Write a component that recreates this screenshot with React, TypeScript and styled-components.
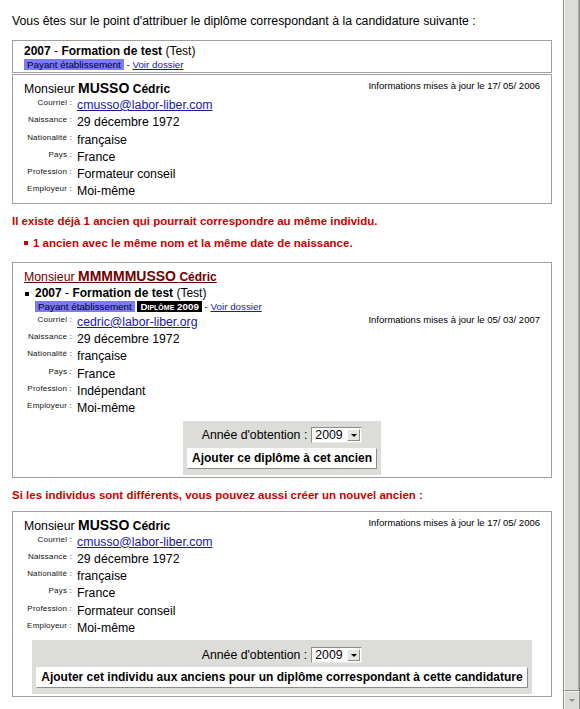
import styled, { createGlobalStyle } from "styled-components";

type Field = { label: string; value: string; link?: boolean };

const GlobalStyle = createGlobalStyle`
  html, body {
    margin: 0;
    padding: 0;
    background: #fff;
  }
  body {
    font-family: "Liberation Sans", Arial, sans-serif;
    font-size: 12.3px;
    color: #000;
    overflow: hidden;
  }
`;

const fieldsFor = (email: string, profession: string): Field[] => [
  { label: "Courriel", value: email, link: true },
  { label: "Naissance", value: "29 décembre 1972" },
  { label: "Nationalité", value: "française" },
  { label: "Pays", value: "France" },
  { label: "Profession", value: profession },
  { label: "Employeur", value: "Moi-même" },
];

const FormationSummary = (props: { diploma?: string }) => (
  <div>
    <FormationLine>
      <b>2007</b> - <b>Formation de test</b> (Test)
    </FormationLine>
    <BadgeLine>
      <Badge>Payant établissement</Badge>
      {props.diploma && (
        <>
          {" "}
          <Badge $variant="diploma">Diplôme {props.diploma}</Badge>
        </>
      )}{" "}
      - <SmallLink href="#">Voir dossier</SmallLink>
    </BadgeLine>
  </div>
);

const ActionPanel = (props: { label: string }) => (
  <Panel>
    <YearLine>
      Année d'obtention :
      <FakeSelect>
        <span>2009</span>
        <SelectArrow />
      </FakeSelect>
    </YearLine>
    <ActionButton type="button">{props.label}</ActionButton>
  </Panel>
);

const Fields = (props: { fields: Field[] }) => (
  <>
    {props.fields.map((f) => (
      <FieldRow key={f.label}>
        <FieldLabel>{f.label} :</FieldLabel>
        {f.link ? <ValueLink href="#">{f.value}</ValueLink> : <span>{f.value}</span>}
      </FieldRow>
    ))}
  </>
);

const PersonCard = (props: {
  surname: string;
  updated: string;
  fields: Field[];
  match?: boolean;
  formation?: boolean;
  action?: string;
}) => {
  const updated = <Updated>Informations mises à jour le {props.updated}</Updated>;
  return (
    <Box $padding="5px 11px 2px">
      {!props.formation && updated}
      <NameLine>
        <Name $match={props.match}>
          Monsieur <Surname>{props.surname}</Surname> <FirstName>Cédric</FirstName>
        </Name>
      </NameLine>
      {props.formation && (
        <>
          <FormationItem>
            <FormationSummary diploma="2009" />
          </FormationItem>
          {updated}
        </>
      )}
      <Fields fields={props.fields} />
      {props.action && <ActionPanel label={props.action} />}
    </Box>
  );
};

export default function App() {
  return (
    <Page>
      <GlobalStyle />
      <Content>
        <Intro>
          Vous êtes sur le point d'attribuer le diplôme correspondant à la candidature suivante :
        </Intro>
        <Box $padding="3px 11px 2px">
          <FormationSummary />
        </Box>
        <PersonCard
          surname="MUSSO"
          updated="17/ 05/ 2006"
          fields={fieldsFor("cmusso@labor-liber.com", "Formateur conseil")}
        />

        <Warning>Il existe déjà 1 ancien qui pourrait correspondre au même individu.</Warning>
        <WarningList>
          <WarningItem>1 ancien avec le même nom et la même date de naissance.</WarningItem>
        </WarningList>

        <PersonCard
          match
          formation
          surname="MMMMMUSSO"
          updated="05/ 03/ 2007"
          fields={fieldsFor("cedric@labor-liber.org", "Indépendant")}
          action="Ajouter ce diplôme à cet ancien"
        />

        <Warning $spaced>
          Si les individus sont différents, vous pouvez aussi créer un nouvel ancien :
        </Warning>

        <PersonCard
          surname="MUSSO"
          updated="17/ 05/ 2006"
          fields={fieldsFor("cmusso@labor-liber.com", "Formateur conseil")}
          action="Ajouter cet individu aux anciens pour un diplôme correspondant à cette candidature"
        />
      </Content>
      <ScrollBar>
        <ScrollThumb />
        <ScrollButton>
          <ScrollArrow />
        </ScrollButton>
      </ScrollBar>
    </Page>
  );
}

const Page = styled.div`
  display: flex;
  width: 580px;
  height: 709px;
  overflow: hidden;
`;

const Content = styled.div`
  flex: 1;
  min-width: 0;
  padding: 14px 11px 0 12px;
`;

const Intro = styled.p`
  margin: 0 0 11px;
  line-height: 15px;
`;

const Box = styled.div<{ $padding: string }>`
  border: 1px solid #a09f9b;
  padding: ${(p) => p.$padding};
  margin-bottom: 1px;
  &::after {
    content: "";
    display: block;
    clear: both;
  }
`;

const FormationLine = styled.div`
  font-size: 12px;
  line-height: 15px;
`;

const BadgeLine = styled.div`
  font-size: 9.8px;
  line-height: 11px;
`;

const Badge = styled.span<{ $variant?: "diploma" }>`
  display: inline-block;
  padding: 0 3px;
  line-height: 11px;
  background: ${(p) => (p.$variant === "diploma" ? "#000" : "#7b7bf6")};
  color: ${(p) => (p.$variant === "diploma" ? "#fff" : "#000018")};
  font-variant: ${(p) => (p.$variant === "diploma" ? "small-caps" : "normal")};
  font-weight: ${(p) => (p.$variant === "diploma" ? "bold" : "normal")};
`;

const SmallLink = styled.a`
  color: #1a1aa6;
`;

const Updated = styled.div`
  float: right;
  font-size: 9.5px;
  line-height: 12px;
`;

const NameLine = styled.div`
  line-height: 16px;
`;

const Name = styled.span<{ $match?: boolean }>`
  color: ${(p) => (p.$match ? "#6e0000" : "#000")};
  text-decoration: ${(p) => (p.$match ? "underline" : "none")};
`;

const Surname = styled.b`
  font-size: 14px;
`;

const FirstName = styled.b`
  font-size: 12px;
`;

const FormationItem = styled.div`
  display: flex;
  align-items: flex-start;
  gap: 6px;
  margin: 1px 0 2px 1px;
  &::before {
    content: "";
    flex: none;
    width: 4px;
    height: 4px;
    margin-top: 6px;
    background: #000;
  }
`;

const FieldRow = styled.div`
  display: grid;
  grid-template-columns: 48px 1fr;
  column-gap: 5px;
  align-items: start;
  line-height: 17.3px;
`;

const FieldLabel = styled.span`
  padding-top: 1px;
  text-align: right;
  font-size: 8px;
  line-height: 10px;
  letter-spacing: 0.2px;
  white-space: nowrap;
  color: #111;
`;

const ValueLink = styled.a`
  color: #1a1aa6;
  justify-self: start;
`;

const Warning = styled.p<{ $spaced?: boolean }>`
  margin: ${(p) => (p.$spaced ? "10px 0 9px" : "10px 0 8px")};
  color: #cc0000;
  font-weight: bold;
  font-size: 11.5px;
  line-height: 14px;
`;

const WarningList = styled.ul`
  margin: 0 0 12px;
  padding: 0;
  list-style: none;
`;

const WarningItem = styled.li`
  display: flex;
  align-items: center;
  gap: 5px;
  margin-left: 12px;
  color: #cc0000;
  font-weight: bold;
  font-size: 11.5px;
  line-height: 14px;
  &::before {
    content: "";
    width: 4px;
    height: 4px;
    background: currentColor;
  }
`;

const Panel = styled.div`
  width: fit-content;
  margin: 3px auto 0;
  padding: 6px 4px;
  background: #dcdcd8;
  text-align: center;
`;

const YearLine = styled.div`
  display: flex;
  justify-content: center;
  align-items: center;
  gap: 4px;
  height: 17px;
`;

const FakeSelect = styled.span`
  display: inline-flex;
  align-items: center;
  justify-content: space-between;
  width: 51px;
  height: 16px;
  box-sizing: border-box;
  padding: 0 1px 0 3px;
  background: #fff;
  border: 1px solid;
  border-color: #8c8c88 #e8e8e4 #e8e8e4 #8c8c88;
`;

const SelectArrow = styled.span`
  position: relative;
  width: 13px;
  height: 12px;
  box-sizing: border-box;
  background: #e6e6e2;
  border: 1px solid;
  border-color: #fff #8c8c88 #8c8c88 #fff;
  &::after {
    content: "";
    position: absolute;
    left: 3px;
    top: 4px;
    border-left: 3px solid transparent;
    border-right: 3px solid transparent;
    border-top: 3px solid #000;
  }
`;

const ActionButton = styled.button`
  display: block;
  width: 100%;
  margin-top: 4px;
  padding: 2px 4px;
  font-family: inherit;
  font-size: 12px;
  font-weight: bold;
  line-height: 15px;
  color: #000;
  background: #fff;
  border: 1px solid;
  border-color: #fff #8c8c88 #8c8c88 #fff;
  white-space: nowrap;
`;

const ScrollBar = styled.div`
  display: flex;
  flex-direction: column;
  width: 17px;
  height: 709px;
  box-sizing: border-box;
  border-left: 1px solid #8e8e8a;
  border-right: 1px solid #8e8e8a;
  background: #dcdcd8;
`;

const ScrollThumb = styled.div`
  flex: 1;
  border-left: 1px solid #f4f4f2;
  border-right: 1px solid #a8a8a4;
  border-bottom: 1px solid #8e8e8a;
  background: #dcdcd8;
`;

const ScrollButton = styled.div`
  display: flex;
  align-items: center;
  justify-content: center;
  height: 17px;
  border-top: 1px solid #f4f4f2;
  border-left: 1px solid #f4f4f2;
  background: #dcdcd8;
`;

const ScrollArrow = styled.span`
  border-left: 3px solid transparent;
  border-right: 3px solid transparent;
  border-top: 3px solid #8e8e8a;
`;
